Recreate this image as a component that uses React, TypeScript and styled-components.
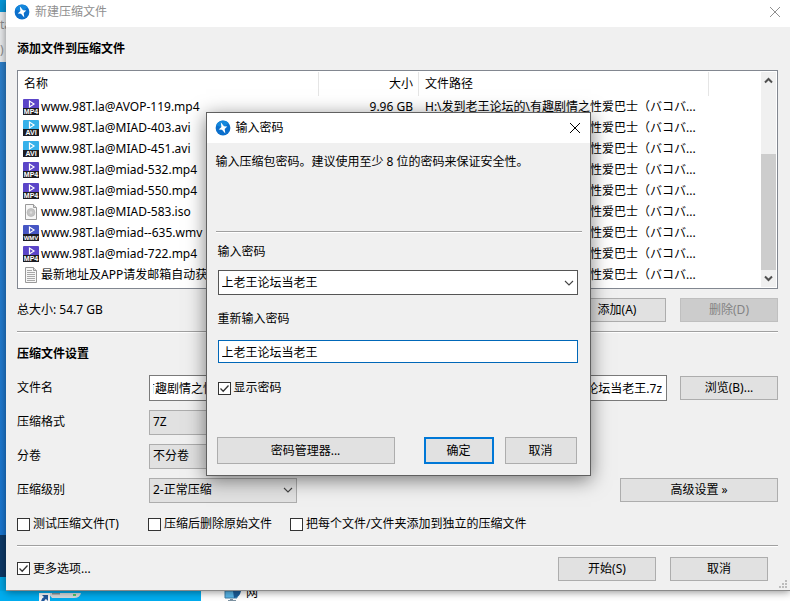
import React, { useLayoutEffect, useRef, useState } from "react";
import styled, { createGlobalStyle, css } from "styled-components";

const GlobalStyle = createGlobalStyle`
  * { box-sizing: border-box; }
  body { margin: 0; }
  body, button, input, select {
    font-family: "Noto Sans", "Noto Sans CJK SC", sans-serif;
    font-size: 12px;
    line-height: 16px;
    color: #000;
  }
`;

/* ---------- desktop ---------- */

const Desktop = styled.div`
  display: flex;
  flex-direction: column;
  min-height: 100vh;
  overflow: hidden;
  background: #00adef;
`;

const Stage = styled.div`
  display: grid;
  grid-template-columns: 6px minmax(0, 1fr);
`;

const Rail = styled.div`
  display: flex;
  flex-direction: column;
  overflow: hidden;
`;

const RailPart = styled.div<{ $color: string; $height?: number }>`
  flex: ${(p) => (p.$height ? `0 0 ${p.$height}px` : "1")};
  background: ${(p) => p.$color};
`;

const RailWindow = styled.div`
  display: flex;
  flex: 0 0 50px;
  flex-direction: column;
  justify-content: space-around;
  overflow: hidden;
  background: #e8eaec;
  color: #8c8c8c;
`;

const BottomStrip = styled.div`
  display: flex;
  flex: 1;
  min-height: 10px;
  overflow: hidden;
`;

const ShortcutArea = styled.div`
  flex: 0 0 201px;
  height: 10px;
  padding-left: 38px;
`;

const ExplorerArea = styled.div`
  display: flex;
  flex: 1;
  gap: 5px;
  height: 10px;
  padding-left: 23px;
  background: #fff;
  line-height: 4px;
`;

/* ---------- shared parts ---------- */

const Window = styled.main`
  position: relative;
  z-index: 1;
  background: #f0f0f0;
  border-bottom: 1px solid #8a8a8a;
  box-shadow: 0 1px 8px rgba(0, 0, 0, 0.45);
`;

const TitleBar = styled.header<{ $main?: boolean }>`
  display: flex;
  align-items: center;
  gap: 5px;
  height: ${(p) => (p.$main ? 27 : 30)}px;
  padding: ${(p) => (p.$main ? "0 9px 4px 8px" : "0 9px 0 8px")};
  background: #fff;
  color: ${(p) => (p.$main ? "#8f8f8f" : "#000")};
`;

const TitleText = styled.h1`
  flex: 1;
  margin: 0;
  font-size: 12px;
  font-weight: 400;
`;

const CloseButton = styled.button`
  display: flex;
  padding: 0;
  border: 0;
  background: none;
  color: inherit;
`;

const Heading = styled.h2<{ $low?: boolean }>`
  margin: 0;
  padding-top: ${(p) => (p.$low ? 4 : 0)}px;
  font-size: 12px;
  font-weight: 700;
  line-height: ${(p) => (p.$low ? 34 : 43)}px;
`;

const Divider = styled.hr`
  height: 2px;
  margin: 0;
  border: 0;
  border-top: 1px solid #a0a0a0;
  background: #fff;
`;

const PushButton = styled.button<{ $width: number; $tall?: boolean; $primary?: boolean }>`
  flex: 0 0 ${(p) => p.$width}px;
  height: ${(p) => (p.$tall ? 27 : 24)}px;
  padding: 0;
  border: ${(p) => (p.$primary ? "2px solid #0078d7" : "1px solid #adadad")};
  background: #e1e1e1;
  &:disabled {
    border-color: #bfbfbf;
    background: #ccc;
    color: #838383;
  }
`;

const fieldBox = css`
  width: 100%;
  min-width: 0;
  padding: 0 4px 0 3px;
  border-radius: 0;
  outline: none;
`;

const TextBox = styled.input<{ $active?: boolean }>`
  ${fieldBox}
  height: ${(p) => (p.$active ? 23 : 26)}px;
  border: 1px solid ${(p) => (p.$active ? "#0067b8" : "#7a7a7a")};
  background: #fff;
`;

const SelectWrap = styled.div<{ $width?: number }>`
  display: grid;
  width: ${(p) => (p.$width ? `${p.$width}px` : "100%")};
  align-items: center;
  & > * { grid-area: 1 / 1; }
  & > svg {
    justify-self: end;
    margin-right: 4px;
    pointer-events: none;
  }
`;

const Select = styled.select<{ $white?: boolean }>`
  ${fieldBox}
  appearance: none;
  height: 25px;
  border: 1px solid ${(p) => (p.$white ? "#555" : "#adadad")};
  background: ${(p) => (p.$white ? "#fff" : "#e1e1e1")};
`;

const CheckLabel = styled.label`
  display: flex;
  align-items: center;
  gap: 3px;
  white-space: nowrap;
`;

const CheckCell = styled.span`
  display: grid;
  place-items: center;
  & > * { grid-area: 1 / 1; }
  & > svg { pointer-events: none; }
`;

const CheckInput = styled.input`
  appearance: none;
  width: 13px;
  height: 13px;
  margin: 0;
  border: 1px solid #333;
  background: #fff;
  & + svg { visibility: hidden; }
  &:checked + svg { visibility: visible; }
`;

/* ---------- main window layout ---------- */

const Body = styled.div`
  padding: 0 12px 0 11px;
`;

const ListFrame = styled.div`
  display: flex;
  height: 219px;
  padding: 1px 1px 1px 0;
  border: 1px solid #828790;
  background: #fff;
`;

const FileTable = styled.table`
  flex: 1;
  min-width: 0;
  align-self: flex-start;
  table-layout: fixed;
  border-collapse: separate;
  border-spacing: 0;
`;

const Col = styled.col<{ $width?: number }>`
  width: ${(p) => (p.$width ? `${p.$width}px` : "auto")};
`;

const HeadCell = styled.th<{ $right?: boolean; $last?: boolean }>`
  height: 24px;
  padding: 0 5px 0 6px;
  border-right: ${(p) => (p.$last ? "0" : "1px solid #e5e5e5")};
  font-weight: 400;
  text-align: ${(p) => (p.$right ? "right" : "left")};
`;

const Cell = styled.td<{ $right?: boolean }>`
  height: 21px;
  padding: 0 6px;
  overflow: hidden;
  white-space: nowrap;
  text-align: ${(p) => (p.$right ? "right" : "left")};
`;

const NameCell = styled.div`
  display: flex;
  align-items: center;
  gap: 2px;
  margin-left: -1px;
`;

const ScrollBar = styled.div`
  display: flex;
  flex: 0 0 15px;
  flex-direction: column;
  background: #f0f0f0;
`;

const ScrollButton = styled.button`
  display: grid;
  flex: 0 0 17px;
  padding: 0;
  border: 0;
  background: none;
  place-items: center;
`;

const Track = styled.div`
  display: flex;
  flex: 1;
  flex-direction: column;
  justify-content: flex-end;
`;

const Thumb = styled.div`
  height: 64%;
  background: #cdcdcd;
`;

const Toolbar = styled.div<{ $inset?: boolean }>`
  display: flex;
  align-items: center;
  gap: 14px;
  height: ${(p) => (p.$inset ? 43 : 42)}px;
  padding-right: ${(p) => (p.$inset ? 10 : 0)}px;
  & > :first-child { margin-right: auto; }
`;

const FormRow = styled.div`
  display: grid;
  grid-template-columns: 132px minmax(0, 1fr) auto;
  align-items: center;
  height: 34px;
`;

const RowAction = styled.div`
  display: flex;
  padding-left: 13px;
`;

const OptionRow = styled.div`
  display: grid;
  grid-template-columns: 131px 142px minmax(0, 1fr);
  align-items: center;
  height: 34px;
  margin-bottom: 4px;
`;

const FooterBar = styled.div`
  display: flex;
  justify-content: flex-end;
  height: 0;
  align-items: flex-end;
`;

const Grip = styled.svg`
  margin: 0 3px 2px 0;
`;

/* ---------- password dialog ---------- */

const Overlay = styled.div`
  position: absolute;
  inset: 0;
  display: flex;
  align-items: flex-start;
  justify-content: center;
  padding-top: 112px;
`;

const Dialog = styled.section`
  width: 385px;
  border: 1px solid #606060;
  background: #f0f0f0;
  box-shadow: 0 4px 18px rgba(0, 0, 0, 0.5);
`;

const DialogBody = styled.form`
  padding: 11px 8px 11px 9px;
`;

const Message = styled.p`
  min-height: 77px;
  margin: 0;
`;

const Fields = styled.div`
  display: flex;
  flex-direction: column;
  padding: 0 4px 0 2px;
`;

const FieldLabel = styled.label<{ $low?: boolean }>`
  padding-top: ${(p) => (p.$low ? 2 : 0)}px;
  line-height: ${(p) => (p.$low ? 43 : 37)}px;
`;

const DialogCheck = styled.div`
  height: 74px;
  padding-top: 17px;
`;

const DialogButtons = styled.div`
  display: flex;
  gap: 11px;
  padding: 0 5px 0 1px;
  & > :first-child { margin-right: auto; }
`;

/* ---------- icons ---------- */

const AppIcon = () => (
  <svg width="16" height="16" viewBox="0 0 16 16" aria-hidden="true">
    <circle cx="8" cy="8" r="7.400" fill="#0b6fcc" />
    <path d="M1.200 5.200A7.400 7.400 0 0 1 13.600 3.200L8 8z" fill="#1487dc" />
    <path d="M5.800 2.300 9 6.200l3.300.3-2.600 2.400.6 4.600-3.300-3.800-3.300-.3 2.700-2.500z" fill="#fff" />
  </svg>
);

const CloseIcon = () => (
  <svg width="12" height="12" viewBox="0 0 12 12" aria-hidden="true">
    <path d="M1 1l10 10M11 1L1 11" stroke="currentColor" strokeWidth="1" fill="none" />
  </svg>
);

const Chevron = () => (
  <svg width="10" height="8" viewBox="0 0 10 8" aria-hidden="true">
    <path d="M1 2l4 4 4-4" stroke="#444" strokeWidth="1.100" fill="none" />
  </svg>
);

const Arrow = ({ up }: { up?: boolean }) => (
  <svg width="9" height="7" viewBox="0 0 9 7" aria-hidden="true">
    <path d={up ? "M1 5.500l3.500-3.500L8 5.500" : "M1 1.500L4.500 5 8 1.500"} stroke="#505050" strokeWidth="2" fill="none" />
  </svg>
);

const Tick = () => (
  <svg width="11" height="11" viewBox="0 0 11 11" aria-hidden="true">
    <path d="M1.500 5.500l2.700 2.700L9.500 2.500" stroke="#333" strokeWidth="1.300" fill="none" />
  </svg>
);

type Kind = "MP4" | "AVI" | "WMV" | "iso" | "txt";
const tints: Record<string, string> = { MP4: "#5b45c8", AVI: "#36b1ea", WMV: "#4656c4" };

const FileIcon = ({ kind }: { kind: Kind }) => {
  if (kind === "iso" || kind === "txt") {
    return (
      <svg width="16" height="16" viewBox="0 0 16 16" aria-hidden="true">
        <path d="M2.500.5h8l3 3v12h-11z" fill="#f7f7f7" stroke="#9a9a9a" />
        <path d="M10.500.5v3h3" fill="#ddd" stroke="#9a9a9a" />
        {kind === "iso" ? (
          <g>
            <circle cx="8" cy="8.500" r="4" fill="#c4c4c4" stroke="#b0b0b0" strokeWidth=".6" />
            <circle cx="8" cy="8.500" r="1.300" fill="#dcdcdc" />
          </g>
        ) : (
          <path d="M4 3.500h5M4 5.500h8M4 7.500h8M4 9.500h8M4 11.500h8M4 13.500h8" stroke="#a8a8a8" />
        )}
      </svg>
    );
  }
  return (
    <svg width="16" height="16" viewBox="0 0 16 16" aria-hidden="true">
      <rect width="16" height="11" rx="1" fill={tints[kind]} />
      <path d="M6.500 2v6L11 5z" fill="none" stroke="#fff" strokeWidth="1.200" />
      <rect y="9" width="16" height="7" fill="#1c1c22" />
      <text x="8" y="15" textAnchor="middle" fill="#fff" fontFamily="Liberation Sans" fontWeight="700" fontSize={kind === "WMV" ? 6 : 7}>
        {kind}
      </text>
    </svg>
  );
};

const ShortcutIcon = () => (
  <svg width="46" height="10" viewBox="0 0 46 10" aria-hidden="true">
    <path d="M10 0h33q-1 5-7 5H14z" fill="#d5dadd" />
    <path d="M14 0h8v1.500h-8z" fill="#8d9499" />
    <path d="M35 1h3v2h-3z" fill="#4dc76a" />
    <path d="M1 0h11v10H1z" fill="#f4f6f8" />
    <path d="M3 10q0-5 3-6L4 2h6v6L8 6Q6 7 6 10z" fill="#20579c" />
  </svg>
);

const MonitorIcon = () => (
  <svg width="17" height="10" viewBox="0 0 17 10" aria-hidden="true">
    <path d="M1 0h12v7H1z" fill="#58b7ea" stroke="#3f7ea6" />
    <path d="M9 0h8q-1 6-7 7z" fill="#1b5f9c" />
    <path d="M6 8h3v1h3v1H4V9h2z" fill="#7d93a2" />
  </svg>
);

/* ---------- data ---------- */

const path = "H:\\发到老王论坛的\\有趣剧情之性爱巴士（バコバ...";

const files: { kind: Kind; name: string; size?: string }[] = [
  { kind: "MP4", name: "www.98T.la@AVOP-119.mp4", size: "9.96 GB" },
  { kind: "AVI", name: "www.98T.la@MIAD-403.avi" },
  { kind: "AVI", name: "www.98T.la@MIAD-451.avi" },
  { kind: "MP4", name: "www.98T.la@miad-532.mp4" },
  { kind: "MP4", name: "www.98T.la@miad-550.mp4" },
  { kind: "iso", name: "www.98T.la@MIAD-583.iso" },
  { kind: "WMV", name: "www.98T.la@miad--635.wmv" },
  { kind: "MP4", name: "www.98T.la@miad-722.mp4" },
  { kind: "txt", name: "最新地址及APP请发邮箱自动获取" },
];

const archiveName =
  "H:\\发到老王论坛的\\有趣剧情之性爱巴士（バコバコバスツアー）有趣剧情之性爱巴士（バコバ）上老王论坛当老王.7z";

const Check = ({ label, checked }: { label: string; checked?: boolean }) => (
  <CheckLabel>
    <CheckCell>
      <CheckInput type="checkbox" defaultChecked={checked} />
      <Tick />
    </CheckCell>
    {label}
  </CheckLabel>
);

const Picker = ({ id, value, width, white }: { id: string; value: string; width?: number; white?: boolean }) => (
  <SelectWrap $width={width}>
    <Select id={id} $white={white} defaultValue={value}>
      <option>{value}</option>
    </Select>
    <Chevron />
  </SelectWrap>
);

export default function App() {
  const nameRef = useRef<HTMLInputElement>(null);
  const [fileName, setFileName] = useState(archiveName);
  const [repeat, setRepeat] = useState("上老王论坛当老王");

  useLayoutEffect(() => {
    const showEnd = () => {
      if (nameRef.current) nameRef.current.scrollLeft = nameRef.current.scrollWidth;
    };
    showEnd();
    document.fonts?.ready.then(showEnd);
  }, []);

  return (
    <Desktop>
      <GlobalStyle />
      <Stage>
        <Rail aria-hidden="true">
          <RailPart $color="#0796d8" $height={12} />
          <RailWindow>
            <span>ta</span>
            <span>)</span>
          </RailWindow>
          <RailPart $color="linear-gradient(#2d7fca, #1976d0)" />
          <RailPart $color="#0d3a68" $height={42} />
          <RailPart $color="#00a5e4" $height={14} />
        </Rail>
        <Window>
          <TitleBar $main>
            <AppIcon />
            <TitleText>新建压缩文件</TitleText>
            <CloseButton aria-label="关闭"><CloseIcon /></CloseButton>
          </TitleBar>
          <Body>
            <Heading>添加文件到压缩文件</Heading>
            <ListFrame>
              <FileTable>
                <colgroup>
                  <Col $width={301} />
                  <Col $width={100} />
                  <Col $width={290} />
                  <Col />
                </colgroup>
                <thead>
                  <tr>
                    <HeadCell>名称</HeadCell>
                    <HeadCell $right>大小</HeadCell>
                    <HeadCell>文件路径</HeadCell>
                    <HeadCell $last />
                  </tr>
                </thead>
                <tbody>
                  {files.map((f) => (
                    <tr key={f.name}>
                      <Cell><NameCell><FileIcon kind={f.kind} />{f.name}</NameCell></Cell>
                      <Cell $right>{f.size}</Cell>
                      <Cell>{path}</Cell>
                      <Cell />
                    </tr>
                  ))}
                </tbody>
              </FileTable>
              <ScrollBar>
                <ScrollButton aria-label="向上滚动"><Arrow up /></ScrollButton>
                <Track><Thumb /></Track>
                <ScrollButton aria-label="向下滚动"><Arrow /></ScrollButton>
              </ScrollBar>
            </ListFrame>
            <Toolbar>
              <span>总大小: 54.7 GB</span>
              <PushButton $width={98}>添加(A)</PushButton>
              <PushButton $width={98} disabled>删除(D)</PushButton>
            </Toolbar>
            <Divider />
            <Heading $low>压缩文件设置</Heading>
            <FormRow>
              <label htmlFor="file-name">文件名</label>
              <TextBox id="file-name" ref={nameRef} value={fileName} onChange={(e) => setFileName(e.target.value)} />
              <RowAction><PushButton $width={98}>浏览(B)...</PushButton></RowAction>
            </FormRow>
            <FormRow>
              <label htmlFor="format">压缩格式</label>
              <Picker id="format" value="7Z" width={148} />
            </FormRow>
            <FormRow>
              <label htmlFor="volume">分卷</label>
              <Picker id="volume" value="不分卷" width={148} />
            </FormRow>
            <FormRow>
              <label htmlFor="level">压缩级别</label>
              <Picker id="level" value="2-正常压缩" width={148} />
              <RowAction><PushButton $width={158}>高级设置 »</PushButton></RowAction>
            </FormRow>
            <OptionRow>
              <Check label="测试压缩文件(T)" />
              <Check label="压缩后删除原始文件" />
              <Check label="把每个文件/文件夹添加到独立的压缩文件" />
            </OptionRow>
            <Divider />
            <Toolbar $inset>
              <Check label="更多选项..." checked />
              <PushButton $width={98}>开始(S)</PushButton>
              <PushButton $width={98}>取消</PushButton>
            </Toolbar>
          </Body>
          <FooterBar>
            <Grip width="8" height="8" viewBox="0 0 8 8" aria-hidden="true">
              <path d="M6 0h2v2H6zM3 3h2v2H3zM6 3h2v2H6zM0 6h2v2H0zM3 6h2v2H3zM6 6h2v2H6z" fill="#bcbcbc" />
            </Grip>
          </FooterBar>
          <Overlay>
            <Dialog role="dialog" aria-labelledby="dialog-title">
              <TitleBar>
                <AppIcon />
                <TitleText id="dialog-title">输入密码</TitleText>
                <CloseButton aria-label="关闭"><CloseIcon /></CloseButton>
              </TitleBar>
              <DialogBody onSubmit={(e) => e.preventDefault()}>
                <Message>输入压缩包密码。建议使用至少 8 位的密码来保证安全性。</Message>
                <Divider />
                <Fields>
                  <FieldLabel htmlFor="password">输入密码</FieldLabel>
                  <Picker id="password" value="上老王论坛当老王" white />
                  <FieldLabel $low htmlFor="repeat">重新输入密码</FieldLabel>
                  <TextBox id="repeat" $active value={repeat} onChange={(e) => setRepeat(e.target.value)} />
                  <DialogCheck><Check label="显示密码" checked /></DialogCheck>
                </Fields>
                <DialogButtons>
                  <PushButton type="button" $width={178} $tall>密码管理器...</PushButton>
                  <PushButton $width={70} $tall $primary>确定</PushButton>
                  <PushButton type="button" $width={72} $tall>取消</PushButton>
                </DialogButtons>
              </DialogBody>
            </Dialog>
          </Overlay>
        </Window>
      </Stage>
      <BottomStrip aria-hidden="true">
        <ShortcutArea><ShortcutIcon /></ShortcutArea>
        <ExplorerArea><MonitorIcon />网</ExplorerArea>
      </BottomStrip>
    </Desktop>
  );
}
